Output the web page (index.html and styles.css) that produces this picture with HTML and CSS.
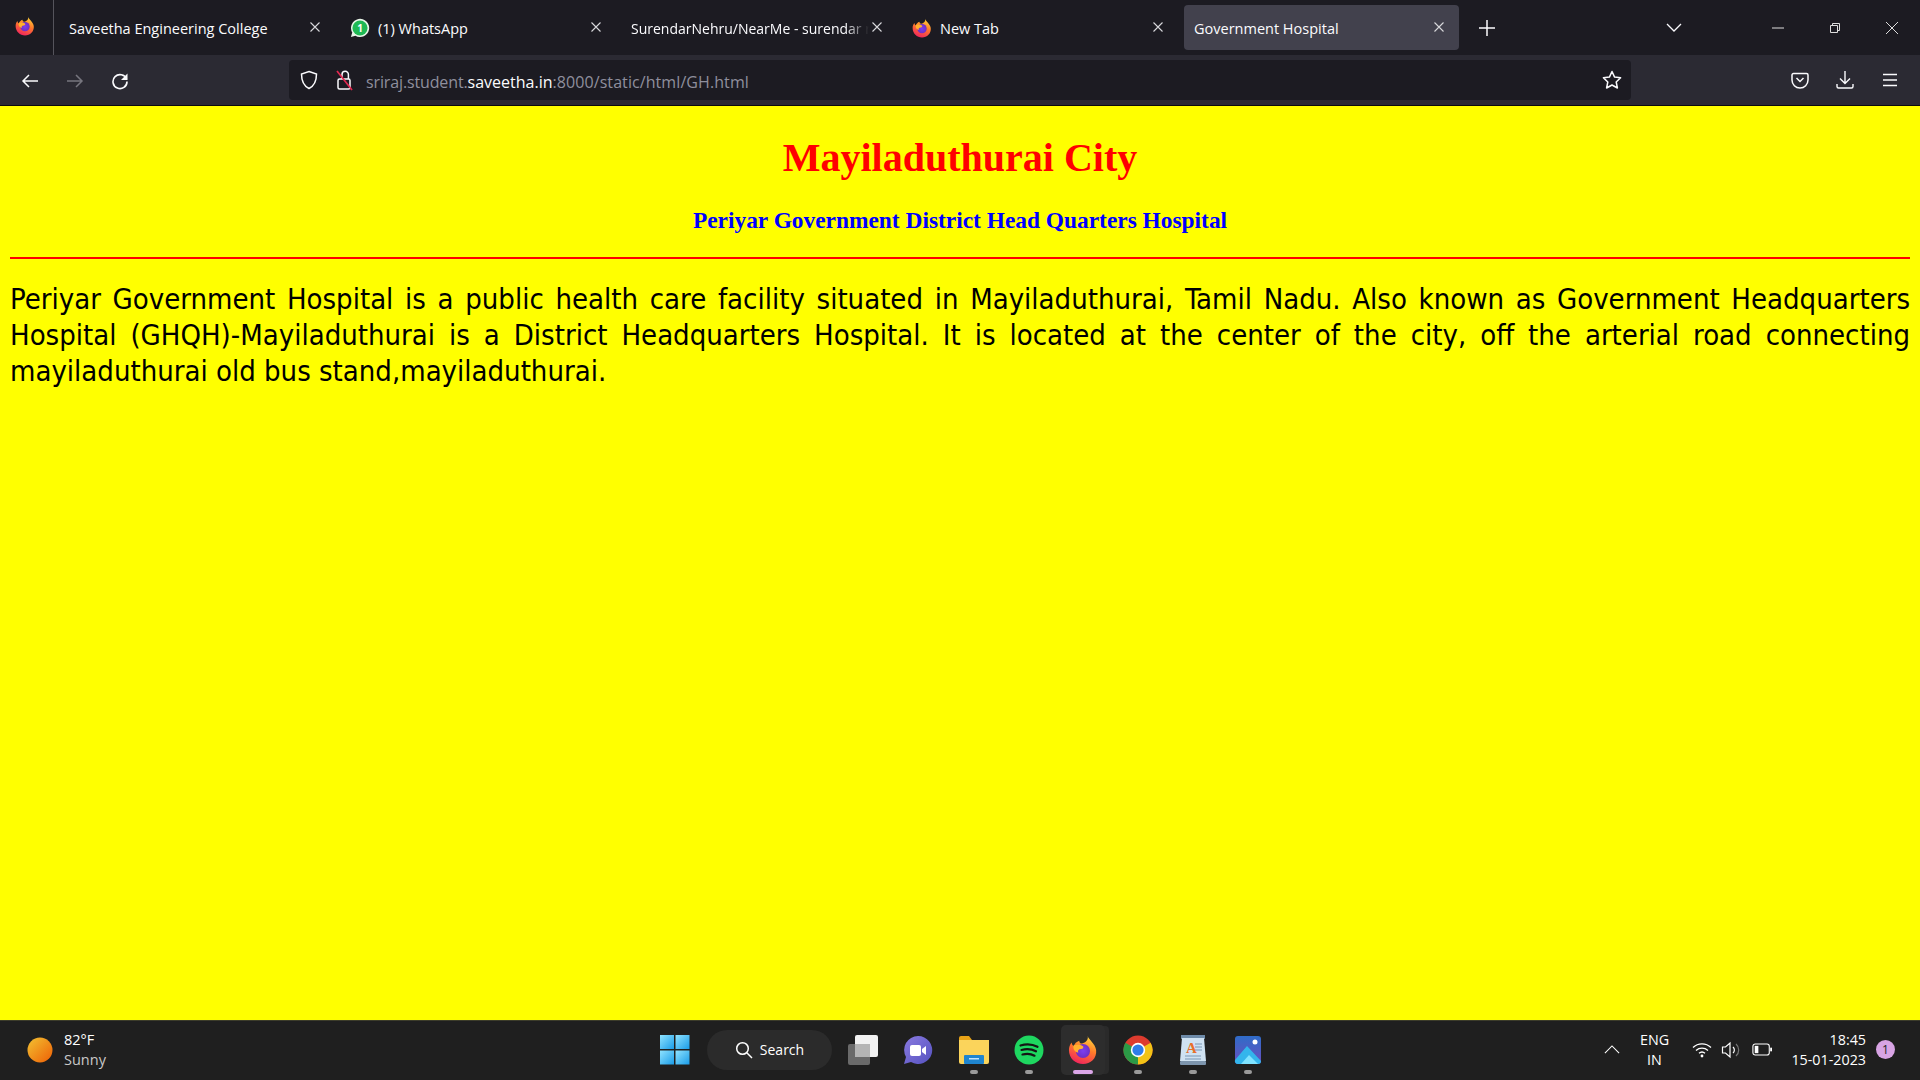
FILE: index.html
```html
<!DOCTYPE html>
<html lang="en">
<head>
<meta charset="utf-8">
<title>Government Hospital</title>
<link rel="stylesheet" href="styles.css">
</head>
<body>
<svg class="defs" width="0" height="0" aria-hidden="true">
  <defs>
    <linearGradient id="ffg" x1="0.7" y1="0" x2="0.3" y2="1"><stop offset="0" stop-color="#ffd53a"/><stop offset="0.45" stop-color="#ff7a2a"/><stop offset="1" stop-color="#f0215f"/></linearGradient>
    <radialGradient id="ffp" cx="0.5" cy="0.5" r="0.5"><stop offset="0" stop-color="#7b3ff0"/><stop offset="1" stop-color="#6e2fc4"/></radialGradient>
    <linearGradient id="wing" x1="0" y1="0" x2="1" y2="1"><stop offset="0" stop-color="#8fe3ff"/><stop offset="1" stop-color="#1a9ce8"/></linearGradient>
    <linearGradient id="sun" x1="0" y1="0" x2="1" y2="1"><stop offset="0" stop-color="#f2c232"/><stop offset="1" stop-color="#ee5f05"/></linearGradient>
    <linearGradient id="chat" x1="0" y1="0" x2="1" y2="1"><stop offset="0" stop-color="#8a7ae0"/><stop offset="1" stop-color="#5552c0"/></linearGradient>
    <linearGradient id="photo" x1="0" y1="0" x2="0" y2="1"><stop offset="0" stop-color="#2f6cc8"/><stop offset="1" stop-color="#6a4fc0"/></linearGradient>
    <symbol id="firefox" viewBox="0 0 32 32">
      <path d="M21 1c1 4 8 8 9 15 1 9-6 15-14 15C8 31 1 25 1 16c0-3 1-6 3-8 0 2 1 3 2 4 1-3 3-5 6-6 0 2 1 3 3 3 4-1 7-4 6-8z" fill="url(#ffg)"/>
      <circle cx="16" cy="17" r="7.5" fill="url(#ffp)"/>
      <path d="M6 11c3-1 7-1 10 1 1 1 0 3-2 3-3 0-4 2-3 4-4-1-6-4-5-8z" fill="#ffb02e"/>
    </symbol>
    <symbol id="x" viewBox="0 0 12 12"><path d="M1.5 1.5l9 9M10.5 1.5l-9 9" fill="none" stroke="currentColor" stroke-width="1.1"/></symbol>
  </defs>
</svg>

<header class="chrome">
  <div class="tabbar">
    <div class="ffslot"><svg class="ic20"><use href="#firefox"/></svg></div>
    <div class="tabs">
      <div class="tab"><span class="tab-title">Saveetha Engineering College</span><svg class="tab-x"><use href="#x"/></svg></div>
      <div class="tab">
        <svg class="ic20" viewBox="0 0 22 22"><path d="M1 21l1.500-5A10 10 0 1 1 6 19.500z" fill="#e8f5e8"/><circle cx="11" cy="11" r="8.300" fill="#1fb954"/><text class="wa-num" x="11" y="15">1</text></svg>
        <span class="tab-title">(1) WhatsApp</span><svg class="tab-x"><use href="#x"/></svg>
      </div>
      <div class="tab"><span class="tab-title tab-fade">SurendarNehru/NearMe - surendar r</span><svg class="tab-x"><use href="#x"/></svg></div>
      <div class="tab"><svg class="ic20"><use href="#firefox"/></svg><span class="tab-title">New Tab</span><svg class="tab-x"><use href="#x"/></svg></div>
      <div class="tab tab-active"><span class="tab-title">Government Hospital</span><svg class="tab-x"><use href="#x"/></svg></div>
    </div>
    <svg class="plus" viewBox="0 0 16 16"><path d="M8 0v16M0 8h16" stroke="#fbfbfe" stroke-width="1.500"/></svg>
    <svg class="listall" viewBox="0 0 16 10"><path d="M1 1l7 7 7-7" fill="none" stroke="#fbfbfe" stroke-width="1.300"/></svg>
    <div class="winbtns">
      <svg class="winbtn" viewBox="0 0 14 14"><path d="M1 7h12" stroke="#ddd" stroke-width="1"/></svg>
      <svg class="winbtn" viewBox="0 0 14 14"><path d="M2.500 4.500h7v7h-7zM4.500 4.500v-2h7v7h-2" fill="none" stroke="#ddd" stroke-width="1"/></svg>
      <svg class="winbtn" viewBox="0 0 14 14"><path d="M1 1l12 12M13 1L1 13" stroke="#ddd" stroke-width="1"/></svg>
    </div>
  </div>
  <div class="toolbar">
    <div class="navbtns">
      <svg class="tool" viewBox="0 0 18 18"><path d="M17 9H2M8 3L2 9l6 6" fill="none" stroke="#fbfbfe" stroke-width="1.500"/></svg>
      <svg class="tool" viewBox="0 0 18 18"><path d="M1 9h15M10 3l6 6-6 6" fill="none" stroke="#77767f" stroke-width="1.500"/></svg>
      <svg class="tool" viewBox="0 0 18 18"><path d="M15.500 7A7 7 0 1 0 16 9.500" fill="none" stroke="#fbfbfe" stroke-width="1.600"/><path d="M16.500 1.500v6.500h-6.500z" fill="#fbfbfe"/></svg>
    </div>
    <div class="urlbar">
      <svg class="shield" viewBox="0 0 18 20"><path d="M9 1.500l7.500 2.500c0 7-1.500 11.500-7.500 14.500C3 15.500 1.500 11 1.500 4z" fill="none" stroke="#fbfbfe" stroke-width="1.500"/></svg>
      <svg class="lock" viewBox="0 0 18 22"><rect x="2" y="10" width="12" height="10" rx="1.500" fill="none" stroke="#fbfbfe" stroke-width="1.500"/><path d="M6 10V5.500a3.200 3.200 0 0 1 6.400 0V10" fill="none" stroke="#fbfbfe" stroke-width="1.500"/><path d="M1 2l15 19" stroke="#e22850" stroke-width="1.700"/></svg>
      <div class="url"><span class="url-dim url-sub">sriraj.student.</span><span class="url-host">saveetha.in</span><span class="url-dim url-path">:8000/static/html/GH.html</span></div>
      <svg class="star" viewBox="0 0 20 20"><path d="M10 1.500l2.600 5.600 6 .7-4.400 4.200 1.200 6L10 15l-5.400 3 1.200-6L1.400 7.800l6-.7z" fill="none" stroke="#fbfbfe" stroke-width="1.500" stroke-linejoin="round"/></svg>
    </div>
    <div class="toolright">
      <svg class="tool" viewBox="0 0 18 18"><path d="M2.500 2.500h13a1.500 1.500 0 0 1 1.500 1.500v5a8 8 0 0 1-16 0V4a1.500 1.500 0 0 1 1.500-1.500z" fill="none" stroke="#fbfbfe" stroke-width="1.500"/><path d="M5.500 7l3.500 3.500L12.500 7" fill="none" stroke="#fbfbfe" stroke-width="1.500"/></svg>
      <svg class="tool" viewBox="0 0 18 18"><path d="M9 0v12M4 7.500l5 5 5-5" fill="none" stroke="#fbfbfe" stroke-width="1.400"/><path d="M1 13v2.500A1.500 1.500 0 0 0 2.500 17h13a1.500 1.500 0 0 0 1.500-1.500V13" fill="none" stroke="#fbfbfe" stroke-width="1.400"/></svg>
      <svg class="tool" viewBox="0 0 18 18"><path d="M2 3.500h14M2 9h14M2 14.500h14" stroke="#fbfbfe" stroke-width="1.500"/></svg>
    </div>
  </div>
</header>

<main class="page">
  <h1 class="city">Mayiladuthurai City</h1>
  <h2 class="hospital">Periyar Government District Head Quarters Hospital</h2>
  <hr class="rule">
  <p class="about">Periyar Government Hospital is a public health care facility situated in Mayiladuthurai, Tamil Nadu. Also known as Government Headquarters Hospital (GHQH)-Mayiladuthurai is a District Headquarters Hospital. It is located at the center of the city, off the arterial road connecting mayiladuthurai old bus stand,mayiladuthurai.</p>
</main>

<footer class="taskbar">
  <div class="weather">
    <svg class="sun" viewBox="0 0 26 26"><circle cx="13" cy="13" r="12.500" fill="url(#sun)"/></svg>
    <div class="weather-text"><div class="temp">82°F</div><div class="sky">Sunny</div></div>
  </div>
  <div class="apps">
    <div class="app">
      <svg class="ic30" viewBox="0 0 30 30"><rect x="0" y="0" width="14" height="14" fill="url(#wing)"/><rect x="15.500" y="0" width="14" height="14" fill="url(#wing)"/><rect x="0" y="15.500" width="14" height="14" fill="url(#wing)"/><rect x="15.500" y="15.500" width="14" height="14" fill="url(#wing)"/></svg>
    </div>
    <div class="search">
      <svg class="search-ic" viewBox="0 0 18 18"><circle cx="7.500" cy="7.500" r="5.800" fill="none" stroke="#fff" stroke-width="1.500"/><path d="M11.800 11.800L17 17" stroke="#fff" stroke-width="1.500"/></svg>
      <span>Search</span>
    </div>
    <div class="app">
      <svg class="ic30" viewBox="0 0 30 30"><rect x="0" y="9" width="22" height="21" rx="2" fill="#6a6a6a"/><rect x="7" y="0" width="23" height="22" rx="2" fill="#f2f2f2"/><rect x="7" y="9" width="15" height="13" fill="#b5b5b5"/></svg>
    </div>
    <div class="app app-chat">
      <svg class="ic30" viewBox="0 0 30 30"><path d="M15 1a14 14 0 1 1-7 26l-7 2 2-7A14 14 0 0 1 15 1z" fill="url(#chat)"/><rect x="7" y="10" width="11" height="11" rx="2" fill="#fff"/><path d="M19 14l4-3v9l-4-3z" fill="#fff"/></svg>
    </div>
    <div class="app app-open">
      <svg class="ic30" viewBox="0 0 30 30"><path d="M0 3a2 2 0 0 1 2-2h8l3 4h-13z" fill="#e8a317"/><path d="M0 5h30v22a2 2 0 0 1-2 2H2a2 2 0 0 1-2-2z" fill="#fbd45b"/><rect x="5" y="20" width="20" height="9" rx="1" fill="#1f85cf"/><rect x="10" y="23" width="10" height="1.500" fill="#bfe3ff"/></svg>
      <i class="dot"></i>
    </div>
    <div class="app app-open">
      <svg class="ic30" viewBox="0 0 30 30"><circle cx="15" cy="15" r="14.500" fill="#1ed760"/><path d="M6.500 10.500c6-1.800 12-1.300 17 1.300M7.500 15c5-1.400 10-1 14.500 1.300M8.500 19.500c4-1 8.500-.8 12 1.200" fill="none" stroke="#151515" stroke-width="2.200" stroke-linecap="round"/></svg>
      <i class="dot"></i>
    </div>
    <div class="app app-active">
      <svg class="ic30"><use href="#firefox"/></svg>
      <i class="dot dot-active"></i>
    </div>
    <div class="app app-open">
      <svg class="ic30" viewBox="0 0 30 30"><circle cx="15" cy="15" r="14.500" fill="#dd3b2e"/><path d="M15 15L27.600 7.700A14.500 14.500 0 0 1 15 29.500z" fill="#f3c316"/><path d="M15 15L15 29.500A14.500 14.500 0 0 1 2.400 7.700z" fill="#2b9a46"/><circle cx="15" cy="15" r="7.200" fill="#fff"/><circle cx="15" cy="15" r="5.600" fill="#2f7de9"/></svg>
      <i class="dot"></i>
    </div>
    <div class="app app-open">
      <svg class="ic30" viewBox="0 0 30 30"><rect x="3" y="0" width="24" height="4" fill="#6d8aa8"/><path d="M4 3h22l2 23H2z" fill="#cfe2f2"/><rect x="2" y="26" width="26" height="4" rx="1" fill="#7d95ad"/><text class="doc-a" x="8" y="18">A</text><path d="M17 9h7M17 12h7M17 15h7M7 21h16M7 24h16" stroke="#7a97b4" stroke-width="1"/></svg>
      <i class="dot"></i>
    </div>
    <div class="app app-open">
      <svg class="ic30" viewBox="0 0 30 30"><rect x="2" y="1" width="26" height="28" rx="3" fill="url(#photo)"/><circle cx="22" cy="7" r="2.500" fill="#fff"/><path d="M2 25L14 11l14 15v0a3 3 0 0 1-3 3H5a3 3 0 0 1-3-4z" fill="#33b5ec"/><path d="M8 29l8-9 9 9z" fill="#7fe3ff"/></svg>
      <i class="dot"></i>
    </div>
  </div>
  <div class="tray">
    <svg class="tray-up" viewBox="0 0 18 10"><path d="M1 9l8-8 8 8" fill="none" stroke="#fff" stroke-width="1.200"/></svg>
    <div class="lang"><div>ENG</div><div>IN</div></div>
    <svg class="wifi" viewBox="0 0 20 16"><path d="M1 5.500a13 13 0 0 1 18 0M4 8.500a9 9 0 0 1 12 0M7 11.300a4.500 4.500 0 0 1 6 0" fill="none" stroke="#fff" stroke-width="1.300"/><circle cx="10" cy="14" r="1.400" fill="#fff"/></svg>
    <svg class="vol" viewBox="0 0 20 18"><path d="M1.500 6h3L9 2v14l-4.500-4h-3z" fill="none" stroke="#fff" stroke-width="1.200"/><path d="M12 6a4 4 0 0 1 0 6" fill="none" stroke="#fff" stroke-width="1.200"/><path d="M15 3a8 8 0 0 1 0 12" fill="none" stroke="#777" stroke-width="1.200"/></svg>
    <svg class="batt" viewBox="0 0 22 14"><rect x="1" y="1" width="18" height="12" rx="2.500" fill="none" stroke="#fff" stroke-width="1.200"/><rect x="3" y="3" width="4" height="8" fill="#fff"/><rect x="20" y="5" width="2" height="4" fill="#fff"/></svg>
    <div class="clock"><div>18:45</div><div>15-01-2023</div></div>
    <div class="badge">1</div>
  </div>
</footer>
</body>
</html>
```
FILE: styles.css
```css
* { box-sizing: border-box; }
html, body { margin: 0; height: 100%; overflow: hidden; }
body {
  display: flex;
  flex-direction: column;
  width: 1920px;
  height: 1080px;
  background: #ffff00;
  font-family: "Open Sans", "Noto Sans", sans-serif;
}
.defs { position: absolute; }

/* browser chrome */
.chrome { flex: none; height: 106px; background: #2b2a33; border-bottom: 1px solid #0c0c0d; }
.tabbar { display: flex; align-items: center; height: 55px; background: #1c1b22; }
.ffslot { width: 54px; height: 55px; display: flex; align-items: center; justify-content: center; padding: 0 3px 4px 0; border-right: 1px solid #55545c; flex: none; }
.ic20 { width: 20px; height: 20px; flex: none; }
.tabs { display: flex; gap: 6px; margin-left: 6px; align-items: center; flex: none; }
.tab {
  width: 275px;
  height: 45px;
  display: flex;
  align-items: center;
  gap: 8px;
  padding: 0 14px 0 9px;
  border-radius: 4px;
  color: #fbfbfe;
  font-size: 14.5px;
}
.tab-active { background: #42414d; padding-left: 10px; }
.tab-title { flex: 1; min-width: 0; padding-top: 2px; white-space: nowrap; overflow: hidden; }
.tab-fade {
  margin-right: -6px;
  font-size: 14px;
  -webkit-mask-image: linear-gradient(to right, #000 90%, transparent 100%);
  mask-image: linear-gradient(to right, #000 90%, transparent 100%);
}
.tab-x { width: 12px; height: 12px; color: #d8d8dc; flex: none; margin-top: -2px; }
.wa-num { font: 700 11px "Open Sans", sans-serif; fill: #fff; text-anchor: middle; }
.plus { width: 16px; height: 16px; margin-left: 20px; flex: none; }
.listall { width: 16px; height: 10px; margin-left: 171px; flex: none; }
.winbtns { display: flex; gap: 43px; margin-left: 89px; flex: none; }
.winbtn { width: 14px; height: 14px; }

.toolbar { display: flex; align-items: center; height: 50px; padding: 0 0 0 21px; }
.navbtns { display: flex; gap: 27px; width: 268px; padding-top: 1px; flex: none; }
.tool { width: 18px; height: 18px; flex: none; }
.urlbar {
  flex: none;
  width: 1342px;
  height: 40px;
  display: flex;
  align-items: center;
  padding: 0 9px 0 11px;
  background: #1c1b22;
  border-radius: 4px;
}
.shield { width: 18px; height: 20px; flex: none; }
.lock { width: 18px; height: 22px; flex: none; margin-left: 18px; }
.url { flex: 1; margin-left: 12px; padding-top: 3px; font-size: 16px; white-space: nowrap; }
.url-dim { color: #8f8f9d; }
.url-sub { letter-spacing: -.13px; }
.url-path { letter-spacing: .08px; }
.url-host { color: #fbfbfe; }
.star { width: 20px; height: 20px; flex: none; }
.toolright { display: flex; gap: 27px; margin-left: 160px; flex: none; }

/* page */
.page { flex: 1; min-height: 0; padding: 0 10px; background: #ffff00; }
.city {
  margin: 29px 0 0;
  color: #ff0000;
  font: 700 40px/46px "Liberation Serif", serif;
  text-align: center;
}
.hospital {
  margin: 25px 0 0;
  color: #0000ff;
  font: 700 23.4px/28px "Liberation Serif", serif;
  text-align: center;
}
.rule { height: 2px; margin: 23px 0 0; border: 0; background: #ff0000; }
.about {
  margin: 22px 0 0;
  color: #000;
  font-family: "DejaVu Sans", sans-serif;
  font-stretch: condensed;
  font-size: 29px;
  line-height: 36px;
  text-align: justify;
}

/* taskbar */
.taskbar {
  flex: none;
  height: 60px;
  display: grid;
  grid-template-columns: 1fr auto 1fr;
  align-items: center;
  padding-bottom: 2px;
  background: #1f1f1f;
  border-top: 1px solid #3c3c2a;
  color: #fff;
}
.weather { display: flex; align-items: center; gap: 11px; padding-left: 27px; }
.sun { width: 26px; height: 26px; flex: none; }
.weather-text { font-size: 14.5px; line-height: 20px; }
.sky { color: #c8c8c8; }
.apps { display: flex; align-items: center; height: 57px; padding-left: 2px; }
.app { position: relative; width: 55px; height: 50px; display: flex; align-items: center; justify-content: center; flex: none; }
.search + .app { margin-left: 3px; }
.app-chat { margin-right: 1px; }
.ic30 { width: 30px; height: 30px; }
.app-active { width: 44px; margin: 0 5px; background: #2d2d2d; border-radius: 5px; box-shadow: 5px 0 0 -1px #2a2a2a; }
.dot { position: absolute; left: 50%; bottom: 1px; width: 8px; height: 4px; margin-left: -4px; border-radius: 2px; background: #9a9a9a; }
.dot-active { width: 20px; margin-left: -10px; background: #dba6e8; }
.doc-a { font: 700 15px "Liberation Serif", serif; fill: #e8702a; }
.search {
  width: 125px;
  height: 40px;
  margin: 0 0 0 5px;
  display: flex;
  align-items: center;
  justify-content: center;
  gap: 7px;
  background: #2b2b2b;
  border-radius: 20px;
  font-size: 14px;
  flex: none;
}
.search-ic { width: 18px; height: 18px; flex: none; }
.tray { display: flex; align-items: center; justify-content: flex-end; padding-right: 25px; font-size: 14.3px; line-height: 20px; }
.tray-up { width: 16px; height: 9px; flex: none; }
.lang { width: 42px; margin-left: 13.500px; text-align: center; }
.wifi { width: 20px; height: 16px; margin-left: 16px; flex: none; }
.vol { width: 20px; height: 18px; margin-left: 9px; flex: none; }
.batt { width: 20px; height: 13px; margin-left: 11.500px; flex: none; }
.clock { width: 94px; text-align: right; }
.badge { width: 19px; height: 19px; margin-left: 10px; border-radius: 50%; background: #d8a4e4; color: #1f1f1f; font-size: 12px; line-height: 19px; text-align: center; flex: none; }
```
